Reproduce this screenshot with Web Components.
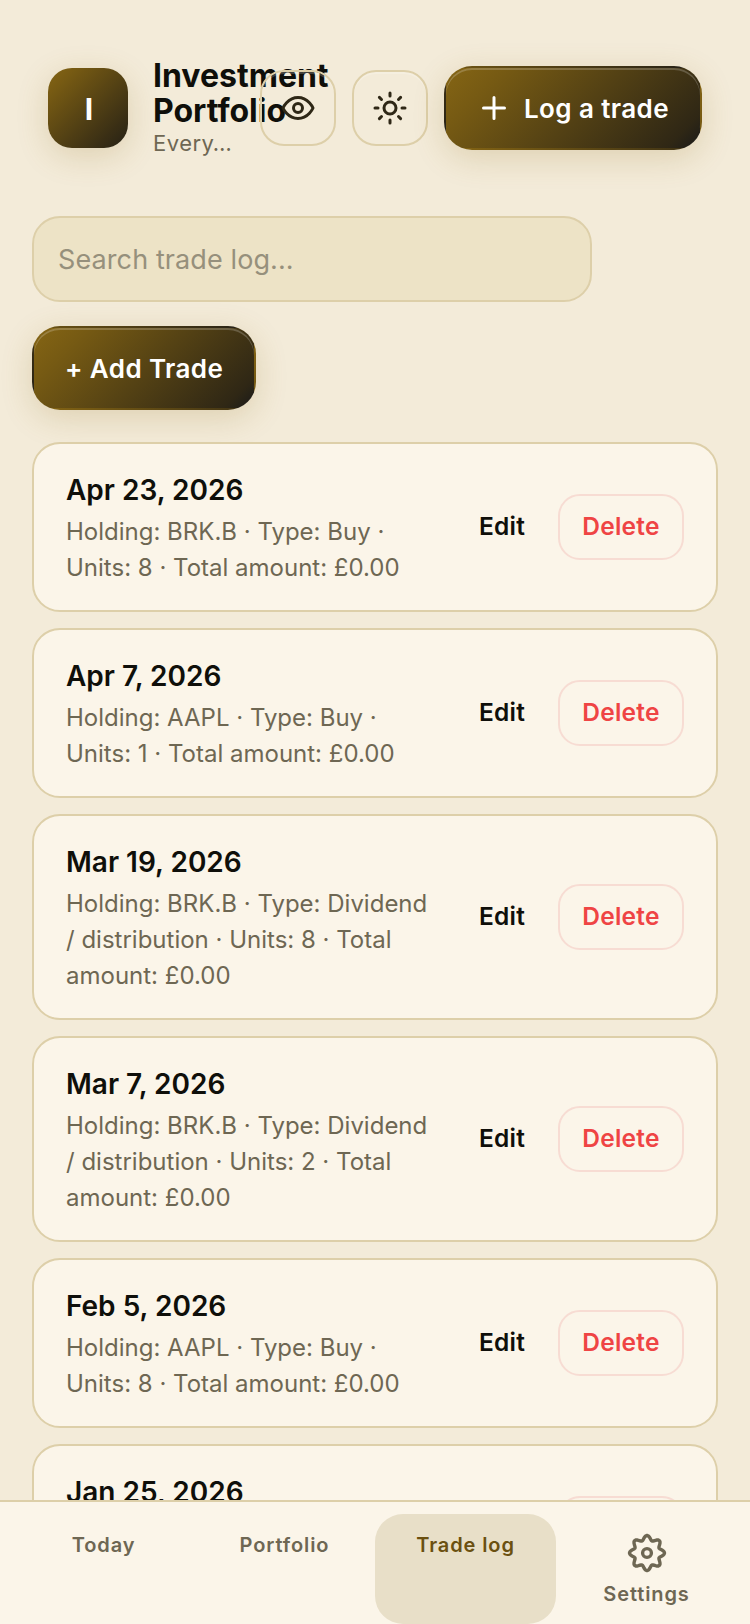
<!DOCTYPE html>
<html lang="en">
<head>
<meta charset="utf-8">
<title>Trade log</title>
<style>
    html, body {
        margin: 0;
        height: 100%;
        background: #f3ebd9;
        font-family: Inter, "Noto Sans", sans-serif;
        color: #0f0f0a;
    }
</style>
</head>
<body>
<portfolio-app>
    <app-header slot="header" title-text="Investment Portfolio" subtitle="Every…" initial="I"></app-header>
    <search-box placeholder="Search trade log..."></search-box>
    <grad-button class="add">+ Add Trade</grad-button>
    <trade-card date="Apr 23, 2026">Holding: BRK.B · Type: Buy · Units: 8 · Total amount: £0.00</trade-card>
    <trade-card date="Apr 7, 2026">Holding: AAPL · Type: Buy · Units: 1 · Total amount: £0.00</trade-card>
    <trade-card date="Mar 19, 2026">Holding: BRK.B · Type: Dividend / distribution · Units: 8 · Total amount: £0.00</trade-card>
    <trade-card date="Mar 7, 2026">Holding: BRK.B · Type: Dividend / distribution · Units: 2 · Total amount: £0.00</trade-card>
    <trade-card date="Feb 5, 2026">Holding: AAPL · Type: Buy · Units: 8 · Total amount: £0.00</trade-card>
    <!-- last row runs under the nav, only its date and the top of Delete show -->
    <trade-card date="Jan 25, 2026" cut-off></trade-card>
    <bottom-nav slot="nav">
        <nav-item>Today</nav-item>
        <nav-item>Portfolio</nav-item>
        <nav-item active>Trade log</nav-item>
        <nav-item gear>Settings</nav-item>
    </bottom-nav>
</portfolio-app>

<script>
const GRADIENT = 'linear-gradient(135deg, #856514 0%, #765a13 18%, #2f2715 90%, #1a1a1a 100%)';
const LINE = '#ddcfa9';

class PortfolioApp extends HTMLElement {
    constructor() {
        super();
        this.attachShadow({ mode: 'open' });
    }

    connectedCallback() {
        this.shadowRoot.innerHTML = `
            <style>
                :host {
                    display: flex;
                    flex-direction: column;
                    height: 100vh;
                    overflow: hidden;
                }
                main {
                    flex: 1;
                    min-height: 0;
                    overflow: hidden;
                    display: flex;
                    flex-direction: column;
                    align-items: flex-start;
                    padding: 0 32px;
                }
            </style>
            <slot name="header"></slot>
            <main><slot></slot></main>
            <slot name="nav"></slot>
        `;
    }
}

class AppHeader extends HTMLElement {
    constructor() {
        super();
        this.attachShadow({ mode: 'open' });
    }

    connectedCallback() {
        this.shadowRoot.innerHTML = `
            <style>
                :host {
                    display: flex;
                    align-items: center;
                    gap: 16px;
                    padding: 58px 48px;
                }
                .brand {
                    flex: 1;
                    min-width: 0;
                    display: flex;
                    align-items: center;
                    gap: 25px;
                }
                .logo {
                    flex: none;
                    box-sizing: border-box;
                    width: 80px;
                    height: 80px;
                    padding: 1px 0 0 2px;
                    border-radius: 24px;
                    background: ${GRADIENT};
                    box-shadow: 0 8px 32px rgba(139, 105, 20, 0.2);
                    color: #fff;
                    font-size: 30px;
                    font-weight: 700;
                    display: flex;
                    align-items: center;
                    justify-content: center;
                }
                .text {
                    flex: 1;
                    min-width: 0;
                }
                h1 {
                    margin: 0;
                    font-size: 32px;
                    line-height: 35.2px;
                    font-weight: 700;
                    color: #0f0f0a;
                }
                p {
                    margin: 0;
                    font-size: 22px;
                    line-height: 30px;
                    letter-spacing: 0.5px;
                    color: #6e6753;
                    white-space: nowrap;
                    overflow: hidden;
                    text-overflow: ellipsis;
                }
                .actions {
                    flex: none;
                    display: flex;
                    align-items: center;
                    gap: 16px;
                }
            </style>
            <div class="brand">
                <div class="logo">${this.getAttribute('initial')}</div>
                <div class="text">
                    <h1>${this.getAttribute('title-text')}</h1>
                    <p>${this.getAttribute('subtitle')}</p>
                </div>
            </div>
            <div class="actions">
                <icon-button>
                    <svg viewBox="0 0 24 24" width="36" height="36" fill="none" stroke="currentColor" stroke-width="2" stroke-linecap="round" stroke-linejoin="round">
                        <path d="M2 12s3-7 10-7 10 7 10 7-3 7-10 7-10-7-10-7Z"/>
                        <circle cx="12" cy="12" r="3"/>
                    </svg>
                </icon-button>
                <icon-button>
                    <svg viewBox="0 0 24 24" width="36" height="36" fill="none" stroke="currentColor" stroke-width="2" stroke-linecap="round" stroke-linejoin="round">
                        <circle cx="12" cy="12" r="4"/>
                        <path d="M12 2v2M12 20v2M4.93 4.93l1.41 1.41M17.66 17.66l1.41 1.41M2 12h2M20 12h2M6.34 17.66l-1.41 1.41M19.07 4.93l-1.41 1.41"/>
                    </svg>
                </icon-button>
                <grad-button>
                    <svg slot="icon" viewBox="0 0 24 24" width="36" height="36" fill="none" stroke="currentColor" stroke-width="2" stroke-linecap="round" stroke-linejoin="round">
                        <path d="M5 12h14M12 5v14"/>
                    </svg>
                    Log a trade
                </grad-button>
            </div>
        `;
    }
}

class IconButton extends HTMLElement {
    constructor() {
        super();
        this.attachShadow({ mode: 'open' });
    }

    connectedCallback() {
        this.shadowRoot.innerHTML = `
            <style>
                :host {
                    display: flex;
                    align-items: center;
                    justify-content: center;
                    box-sizing: border-box;
                    width: 76px;
                    height: 76px;
                    border: 2px solid ${LINE};
                    border-radius: 24px;
                    color: #2e2716;
                    box-shadow: inset 0 2px 0 rgba(255, 255, 255, 0.2);
                }
            </style>
            <slot></slot>
        `;
    }
}

class GradButton extends HTMLElement {
    constructor() {
        super();
        this.attachShadow({ mode: 'open' });
    }

    connectedCallback() {
        this.shadowRoot.innerHTML = `
            <style>
                :host {
                    display: inline-flex;
                    flex: none;
                    align-items: center;
                    gap: 12px;
                    box-sizing: border-box;
                    height: 84px;
                    padding: 0 31px 0 30px;
                    border: 2px solid transparent;
                    border-radius: 28px;
                    background: ${GRADIENT};
                    box-shadow: inset 0 2px 0 rgba(255, 255, 255, 0.2), 0 8px 32px rgba(139, 105, 20, 0.2);
                    color: #fff;
                    font-size: 26px;
                    font-weight: 600;
                    letter-spacing: 0.4px;
                    white-space: nowrap;
                }
                :host(.add) {
                    margin: 24px 0 32px;
                    padding: 0 31px;
                }
                ::slotted(svg) {
                    display: block;
                }
            </style>
            <slot name="icon"></slot>
            <slot></slot>
        `;
    }
}

class SearchBox extends HTMLElement {
    constructor() {
        super();
        this.attachShadow({ mode: 'open' });
    }

    connectedCallback() {
        this.shadowRoot.innerHTML = `
            <style>
                :host {
                    display: flex;
                    align-items: center;
                    box-sizing: border-box;
                    flex: none;
                    width: 560px;
                    height: 86px;
                    padding: 1px 24px 0;
                    border: 2px solid ${LINE};
                    border-radius: 28px;
                    background: #ede3c6;
                    color: #96907c;
                    font-size: 27px;
                    letter-spacing: 0.1px;
                }
            </style>
            ${this.getAttribute('placeholder')}
        `;
    }
}

class TradeCard extends HTMLElement {
    constructor() {
        super();
        this.attachShadow({ mode: 'open' });
    }

    connectedCallback() {
        const cutOff = this.hasAttribute('cut-off');
        this.shadowRoot.innerHTML = `
            <style>
                :host {
                    display: flex;
                    align-items: center;
                    gap: 16px;
                    box-sizing: border-box;
                    flex: none;
                    width: 686px;
                    margin-bottom: 16px;
                    padding: 24px 32px;
                    border: 2px solid ${LINE};
                    border-radius: 28px;
                    background: #fbf5e9;
                }
                .info {
                    flex: 1;
                    min-width: 0;
                }
                .date {
                    font-size: 28px;
                    line-height: 44px;
                    font-weight: 600;
                    color: #0f0f0a;
                    margin-bottom: 2px;
                }
                .detail {
                    min-height: 72px;
                    font-size: 24px;
                    line-height: 36px;
                    color: #6e6753;
                }
                .actions {
                    flex: none;
                    display: flex;
                    align-items: center;
                    gap: 8px;
                    font-size: 24.5px;
                    font-weight: 600;
                    letter-spacing: 0.24px;
                }
                .edit {
                    min-width: 47px;
                    padding: 0 24px 3px;
                    color: #0f0f0a;
                }
                .delete {
                    box-sizing: border-box;
                    width: 126px;
                    height: 66px;
                    padding-bottom: 3px;
                    display: flex;
                    align-items: center;
                    justify-content: center;
                    border: 2px solid #f7dcd3;
                    border-radius: 22px;
                    color: #ef4444;
                }
            </style>
            <div class="info">
                <div class="date">${this.getAttribute('date')}</div>
                <div class="detail"><slot></slot></div>
            </div>
            <div class="actions">
                <div class="edit">${cutOff ? '' : 'Edit'}</div>
                <div class="delete">${cutOff ? '' : 'Delete'}</div>
            </div>
        `;
    }
}

class BottomNav extends HTMLElement {
    constructor() {
        super();
        this.attachShadow({ mode: 'open' });
    }

    connectedCallback() {
        this.shadowRoot.innerHTML = `
            <style>
                :host {
                    display: flex;
                    box-sizing: border-box;
                    flex: none;
                    height: 124px;
                    padding: 12px 13px 0;
                    border-top: 2px solid ${LINE};
                    background: #fbf5e9;
                }
            </style>
            <slot></slot>
        `;
    }
}

class NavItem extends HTMLElement {
    constructor() {
        super();
        this.attachShadow({ mode: 'open' });
    }

    // eight rounded lobes around the hub, sampled in polar coordinates
    gearPath() {
        const points = [];
        for (let i = 0; i < 96; i++) {
            const a = (i / 96) * Math.PI * 2;
            const r = 15.25 + 2.25 * Math.cos(8 * a);
            points.push(`${(20 + r * Math.sin(a)).toFixed(2)} ${(20 - r * Math.cos(a)).toFixed(2)}`);
        }
        return `M${points.join('L')}Z`;
    }

    connectedCallback() {
        const gear = this.hasAttribute('gear') ? `
            <svg viewBox="0 0 40 40" width="40" height="40" fill="none" stroke="currentColor" stroke-width="3.4" stroke-linejoin="round">
                <path d="${this.gearPath()}"/>
                <circle cx="20" cy="20" r="4.4"/>
            </svg>` : '';
        this.shadowRoot.innerHTML = `
            <style>
                :host {
                    flex: 1;
                    min-width: 0;
                    display: flex;
                    flex-direction: column;
                    align-items: center;
                    gap: 6px;
                    padding-top: 16px;
                    border-radius: 28px;
                    color: #6e6753;
                    font-size: 20px;
                    line-height: 30px;
                    font-weight: 600;
                    letter-spacing: 0.9px;
                }
                :host([active]) {
                    background: #e8dfc8;
                    color: #6b5010;
                }
                svg {
                    display: block;
                    margin-top: 3px;
                }
            </style>
            ${gear}
            <slot></slot>
        `;
    }
}

customElements.define('portfolio-app', PortfolioApp);
customElements.define('app-header', AppHeader);
customElements.define('icon-button', IconButton);
customElements.define('grad-button', GradButton);
customElements.define('search-box', SearchBox);
customElements.define('trade-card', TradeCard);
customElements.define('bottom-nav', BottomNav);
customElements.define('nav-item', NavItem);
</script>
</body>
</html>
